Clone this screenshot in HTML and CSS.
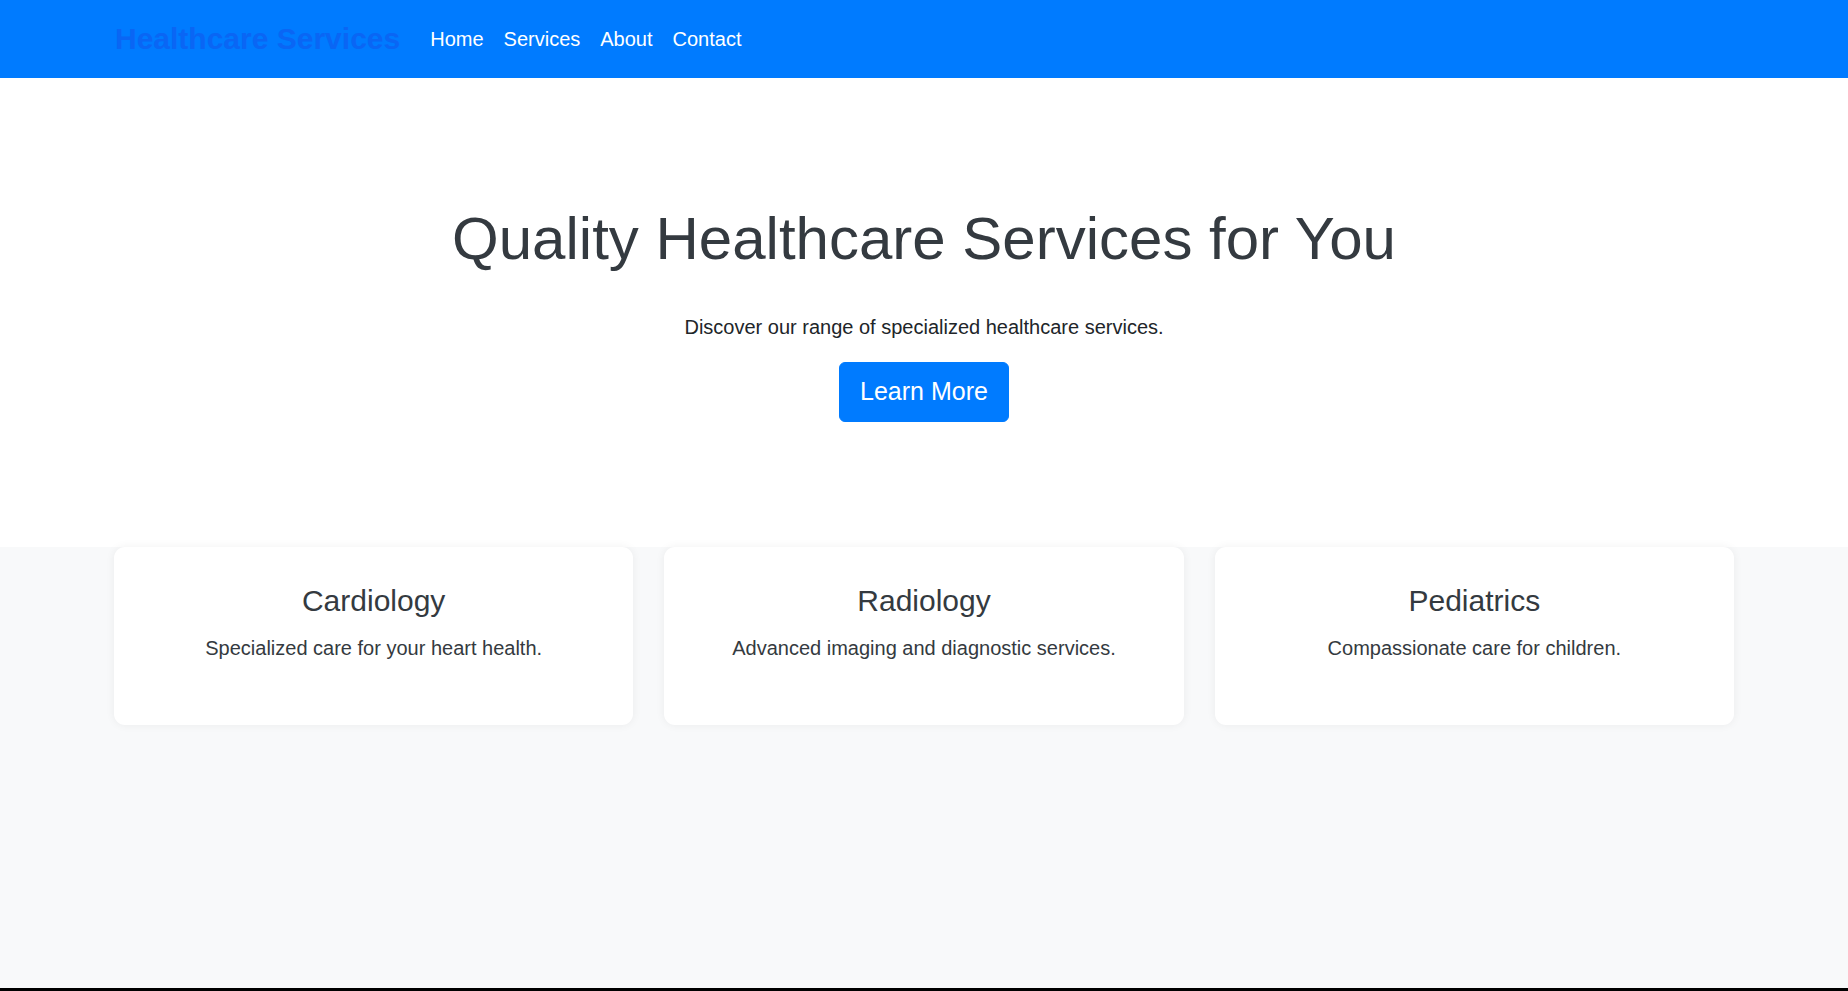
FILE: index.html
```html
<!DOCTYPE html>
<html lang="en">
<head>
<meta charset="utf-8">
<title>Healthcare Services</title>
<link rel="stylesheet" href="styles.css">
</head>
<body>
<div class="page">
  <header class="navbar">
    <div class="container nav-inner">
      <a class="brand" href="#">Healthcare Services</a>
      <nav class="nav-links">
        <a class="nav-link" href="#">Home</a>
        <a class="nav-link" href="#">Services</a>
        <a class="nav-link" href="#">About</a>
        <a class="nav-link" href="#">Contact</a>
      </nav>
    </div>
  </header>

  <section class="hero">
    <h1 class="hero-title">Quality Healthcare Services for You</h1>
    <p class="hero-lead">Discover our range of specialized healthcare services.</p>
    <a class="btn" href="#">Learn More</a>
  </section>

  <section class="services">
    <div class="container cards">
      <div class="card">
        <h3 class="card-title">Cardiology</h3>
        <p class="card-text">Specialized care for your heart health.</p>
      </div>
      <div class="card">
        <h3 class="card-title">Radiology</h3>
        <p class="card-text">Advanced imaging and diagnostic services.</p>
      </div>
      <div class="card">
        <h3 class="card-title">Pediatrics</h3>
        <p class="card-text">Compassionate care for children.</p>
      </div>
    </div>
  </section>

  <footer class="footer"></footer>
</div>
</body>
</html>
```

FILE: styles.css
```css
* { box-sizing: border-box; }

html, body {
  margin: 0;
  padding: 0;
}

body {
  font-family: "Liberation Sans", Arial, sans-serif;
  color: #343a40;
  background: #ffffff;
}

.page {
  min-height: 100vh;
  display: flex;
  flex-direction: column;
}

.container {
  width: 1620px;
  margin: 0 auto;
}

/* Navbar */
.navbar {
  background: #007bff;
  height: 78px;
}

.nav-inner {
  height: 100%;
  display: flex;
  align-items: center;
  padding-left: 1px;
}

.brand {
  font-size: 30px;
  font-weight: bold;
  line-height: 45px;
  color: #0a66f4;
  text-decoration: none;
  margin-right: 20px;
  padding-bottom: 1px;
}

.nav-links {
  display: flex;
}

.nav-link {
  color: #ffffff;
  text-decoration: none;
  font-size: 20px;
  line-height: 30px;
  padding: 0 10px;
}

/* Hero */
.hero {
  background: #ffffff;
  padding: 125px 0 125px;
  text-align: center;
}

.hero-title {
  margin: 0 0 38px;
  font-size: 60px;
  font-weight: normal;
  line-height: 71px;
  color: #343a40;
}

.hero-lead {
  margin: 0 0 20px;
  font-size: 20px;
  line-height: 30px;
  color: #212529;
}

.btn {
  display: inline-block;
  background: #007bff;
  color: #ffffff;
  text-decoration: none;
  font-size: 25px;
  line-height: 37.5px;
  padding: 10px 20px;
  border: 1px solid #007bff;
  border-radius: 6px;
}

/* Services */
.services {
  flex: 1;
  background: #f8f9fa;
}

.cards {
  display: grid;
  grid-template-columns: repeat(3, 1fr);
  gap: 31px;
}

.card {
  background: #ffffff;
  border-radius: 11px;
  box-shadow: 0 0 10px rgba(0, 0, 0, 0.06);
  padding: 36px 20px 39px;
  text-align: center;
}

.card-title {
  margin: 0 0 14px;
  font-size: 30px;
  font-weight: normal;
  line-height: 36px;
  color: #343a40;
}

.card-text {
  margin: 0 0 23px;
  font-size: 20px;
  line-height: 30px;
  color: #343a40;
}

.footer {
  height: 3px;
  background: #000000;
}
```
